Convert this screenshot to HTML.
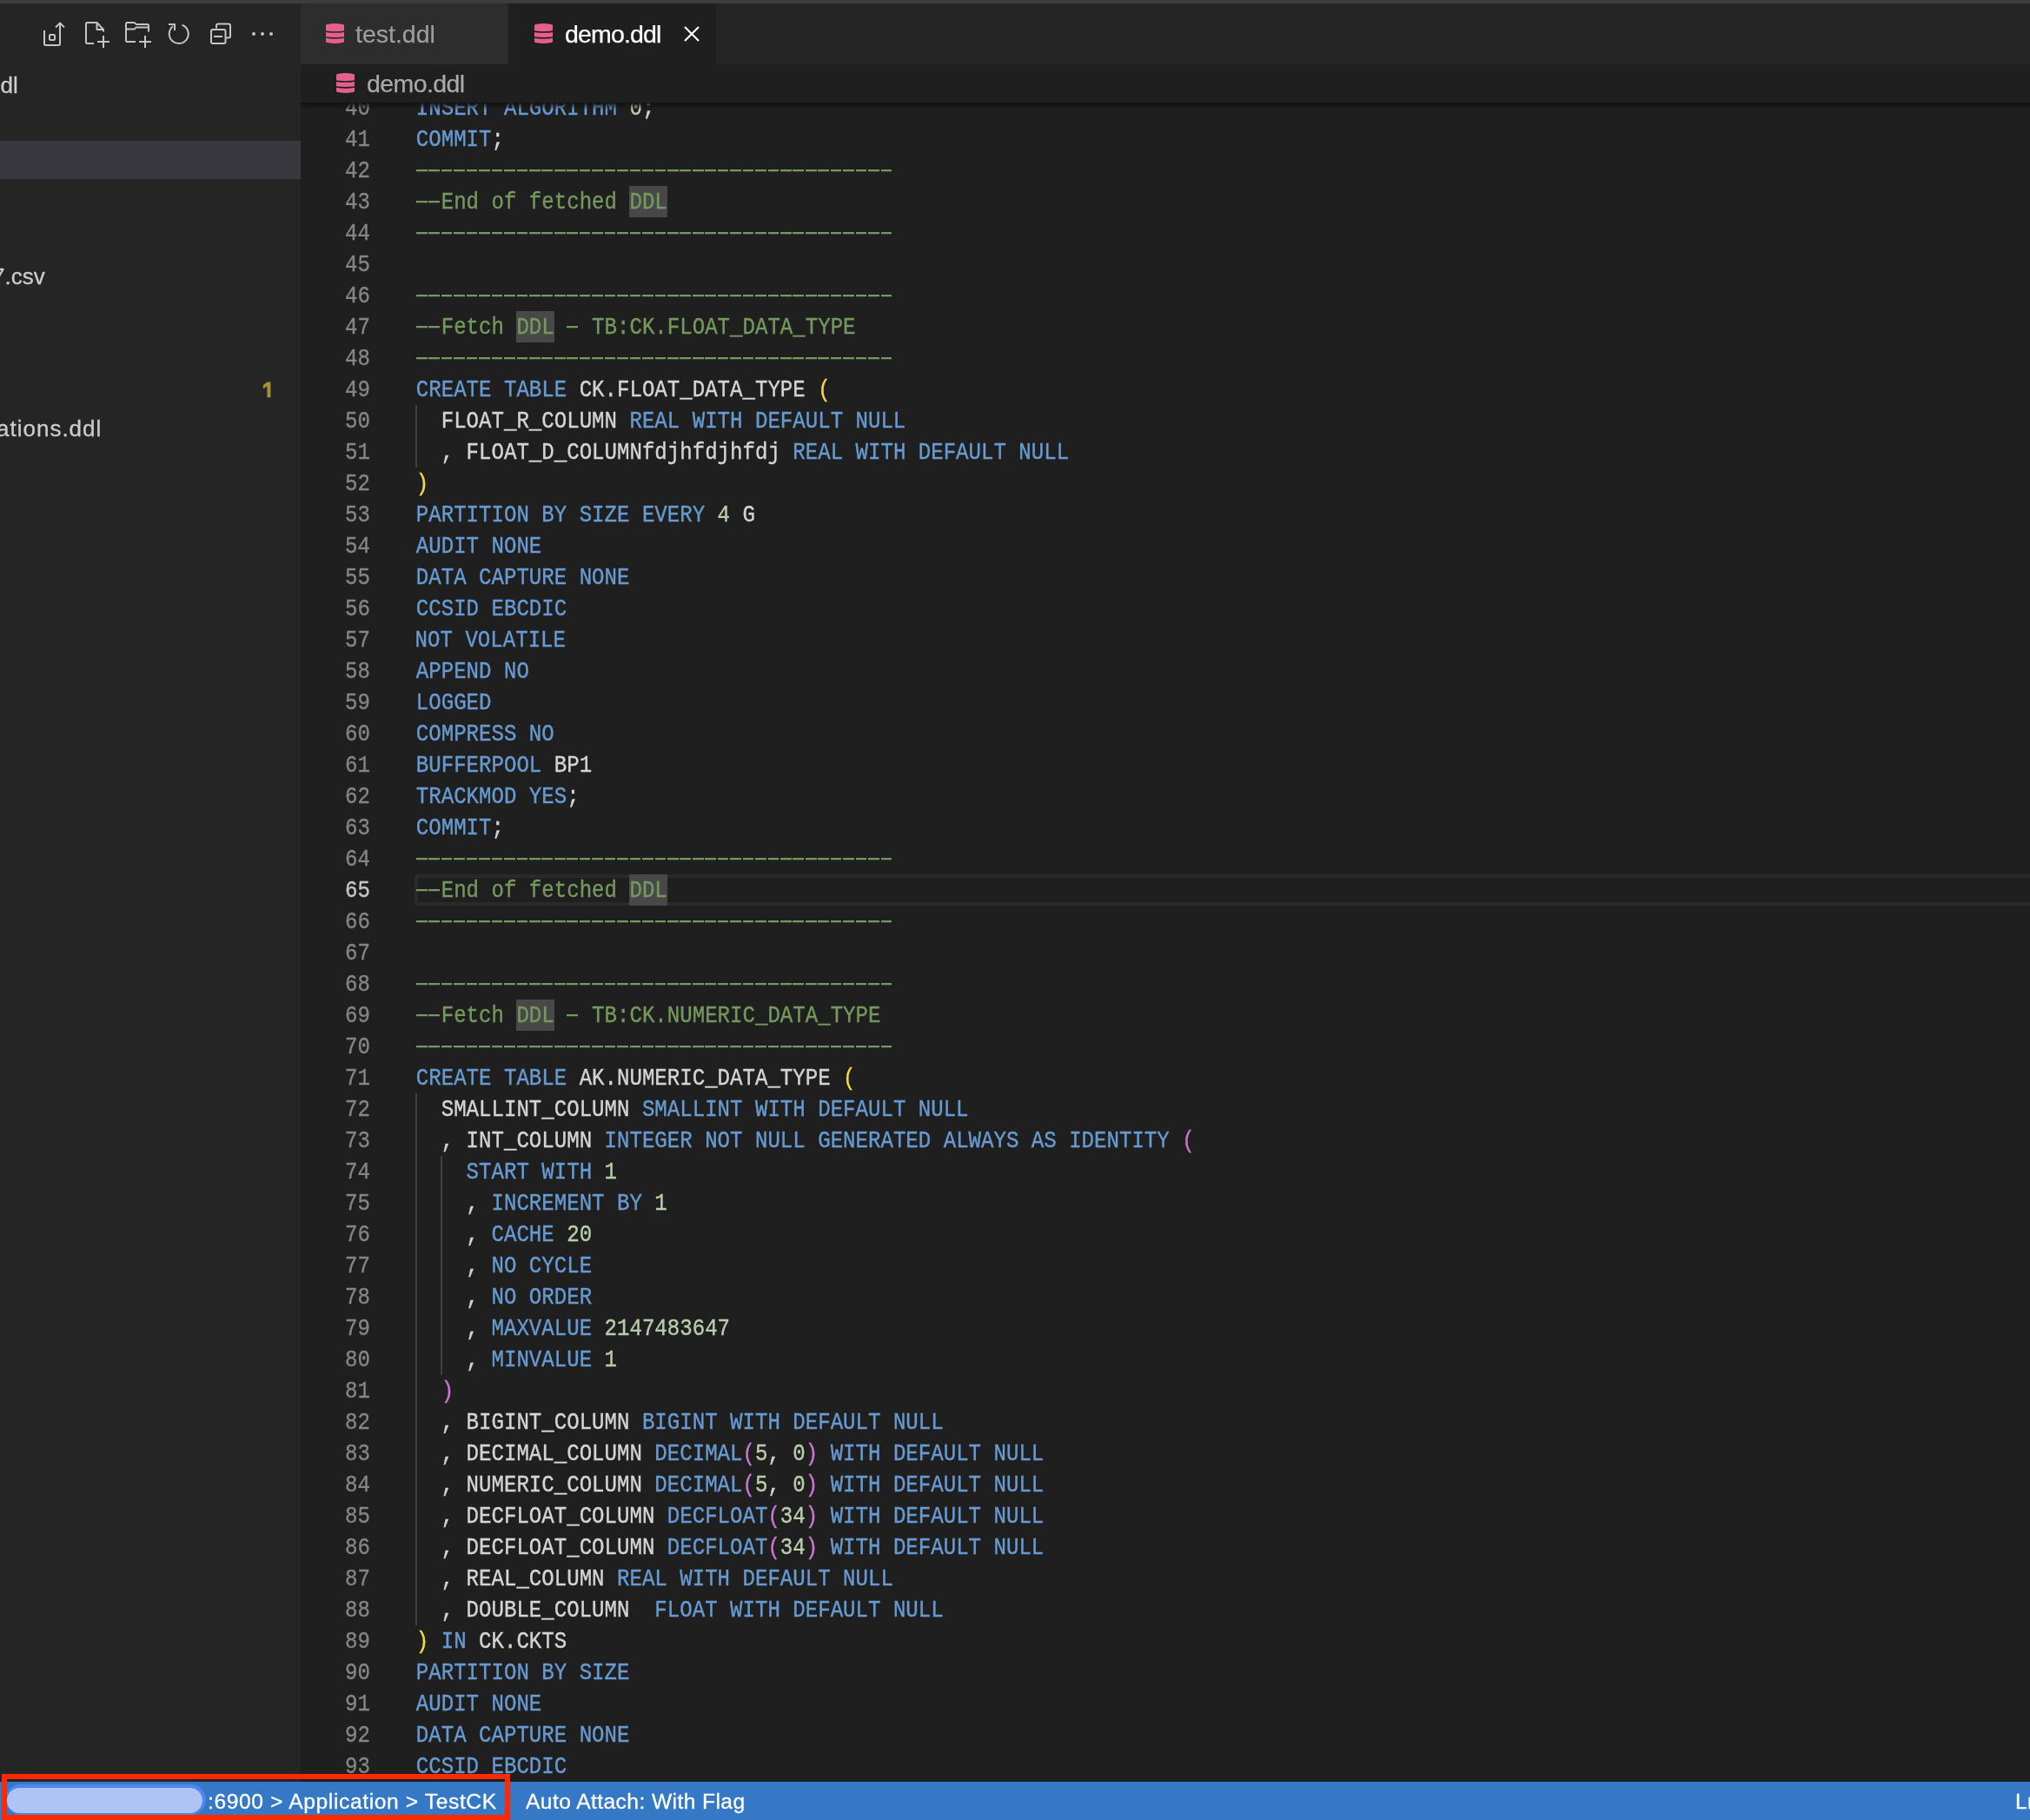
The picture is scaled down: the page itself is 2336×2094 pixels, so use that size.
<!DOCTYPE html>
<html><head><meta charset="utf-8">
<style>
*{margin:0;padding:0;box-sizing:border-box}
html,body{width:2336px;height:2094px;overflow:hidden;background:#1f1f1f}
body{position:relative;font-family:"Liberation Sans",sans-serif;--x0:478.8px;--cw:14.45px}
.abs{position:absolute}
#topstrip{left:0;top:0;width:2336px;height:4px;background:#3d3d3d}
#sidebar{left:0;top:4px;width:346px;height:2046px;background:#252525}
#tabbar{left:346px;top:4px;width:1990px;height:70px;background:#252525}
#tab1{left:346px;top:4px;width:238px;height:70px;background:#2d2d2d}
#tab2{left:586px;top:4px;width:238px;height:70px;background:#1f1f1f}
#crumbs{left:346px;top:74px;width:1990px;height:44px;background:#1f1f1f}
#editor{left:346px;top:118px;width:1990px;height:1932px;background:#1f1f1f;overflow:hidden}
#shadow{left:346px;top:118px;width:1990px;height:8px;background:linear-gradient(#121212,rgba(18,18,18,0))}
#status{left:0;top:2050px;width:2336px;height:44px;background:#3478c6}
.tabtxt{position:absolute;will-change:transform;-webkit-text-stroke:0.25px currentColor;font-size:28.5px;line-height:1;white-space:nowrap}
.sbt{position:absolute;will-change:transform;-webkit-text-stroke:0.3px currentColor;font-size:26px;line-height:1;color:#cccccc;white-space:nowrap}
.stt{position:absolute;will-change:transform;-webkit-text-stroke:0.3px currentColor;font-size:24.6px;line-height:1;color:#ffffff;white-space:nowrap;letter-spacing:0.3px}
.ln{position:absolute;-webkit-text-stroke:0.35px currentColor;left:345px;width:81px;transform:scaleY(1.125);transform-origin:0 8px;height:36px;line-height:36px;text-align:right;font-family:"Liberation Mono",monospace;font-size:24.08px;color:#858585;white-space:pre}
.ln.act{color:#c6c6c6}
.clip{position:absolute;left:0;top:118px;width:2336px;height:1932px;overflow:hidden;will-change:transform}
.clip .ln,.clip .cl,.clip .ig,.clip .hlb,.clip .cur{margin-top:-118px}
.cl{position:absolute;-webkit-text-stroke:0.35px currentColor;left:var(--x0);transform:scaleY(1.125);transform-origin:0 8px;height:36px;line-height:36px;font-family:"Liberation Mono",monospace;font-size:24.08px;color:#d4d4d4;white-space:pre}
.k{color:#679ad1}.c{color:#74985d}.n{color:#bacdab}.b1{color:#f9d849}.b2{color:#cc76d1}
.dsh{display:inline-block;height:2.2px;vertical-align:top;margin-top:16px;background:repeating-linear-gradient(90deg,#74985d 0 12.6px,transparent 12.6px 14.45px)}
.ig{position:absolute;width:2px;background:#404040}
.hlb{position:absolute;height:36px;background:#484848}
.cur{position:absolute;height:36px;border:4px solid #2a2a2a}
svg{position:absolute;overflow:visible}
</style></head><body>
<div id="topstrip" class="abs"></div>
<div id="sidebar" class="abs"></div>
<div class="abs" style="left:0;top:162px;width:346px;height:44px;background:#37373d"></div>
<!-- toolbar icons -->
<svg style="left:0;top:0" width="346" height="74" viewBox="0 0 346 74" fill="none" stroke="#c5c5c5" stroke-width="2" stroke-linejoin="round" stroke-linecap="butt">
  <path d="M51 35 V50.5 Q51 52 52.5 52 H67.5 Q69 52 69 50.5 V26.5"/>
  <path d="M64 31.5 L69 26.5 L74 31.5"/>
  <rect x="57" y="40" width="6" height="6" rx="1"/>
  <path d="M108 50 H100.5 Q99 50 99 48.5 V27.5 Q99 26 100.5 26 H111.5 L119 34 V36.5"/>
  <path d="M111.5 26 V34 H119"/>
  <path d="M112 48 H126 M119 41 V55"/>
  <path d="M156 48 H146.5 Q145 48 145 46.5 V27.5 Q145 26 146.5 26 H154.5 L157 28 H169.5 Q171 28 171 29.5 V36.5"/>
  <path d="M145 33.5 H154.5 L157 31.5 H171"/>
  <path d="M160 48 H174 M167 41 V55"/>
  <path d="M209.6 28.7 A11 11 0 1 1 199.0 30.3"/>
  <path d="M194 28 H201 V35"/>
  <path d="M249 32.5 V29.5 Q249 27.5 251 27.5 H263 Q265 27.5 265 29.5 V41.5 Q265 43.5 263 43.5 H260"/>
  <rect x="243" y="34" width="16.5" height="16" rx="2"/>
  <path d="M246 42 H256"/>
  <circle cx="292" cy="39" r="2" fill="#c5c5c5" stroke="none"/>
  <circle cx="302" cy="39" r="2" fill="#c5c5c5" stroke="none"/>
  <circle cx="312" cy="39" r="2" fill="#c5c5c5" stroke="none"/>
</svg>
<div class="sbt" style="left:-14px;top:85px">ddl</div>
<div class="sbt" style="left:-9px;top:305px">7.csv</div>
<div class="sbt" style="left:-4px;top:480px;letter-spacing:1px">ations.ddl</div>
<svg style="left:0;top:0" width="346" height="500" viewBox="0 0 346 500"><path d="M307.4 439.6 H311.4 V457.2 H307.4 V444.6 L302.8 447.2 V443.2 Z" fill="#a68f36"/></svg>

<div id="tabbar" class="abs"></div>
<div id="tab1" class="abs"></div>
<div id="tab2" class="abs"></div>
<svg style="left:375px;top:27px" width="21" height="23" viewBox="0 0 21 23">
  <path d="M0 2 A10.5 1.9 0 0 1 21 2 V21 A10.5 1.9 0 0 1 0 21 Z" fill="#e5608a"/>
  <path d="M-1 8.7 A11.5 1.3 0 0 0 22 8.7 M-1 15.6 A11.5 1.2 0 0 0 22 15.6" stroke="#2d2d2d" stroke-width="1.7" fill="none"/>
</svg>
<div class="tabtxt" style="left:409px;top:25px;color:#9d9d9d">test.ddl</div>
<svg style="left:615px;top:27px" width="21" height="23" viewBox="0 0 21 23">
  <path d="M0 2 A10.5 1.9 0 0 1 21 2 V21 A10.5 1.9 0 0 1 0 21 Z" fill="#e5608a"/>
  <path d="M-1 8.7 A11.5 1.3 0 0 0 22 8.7 M-1 15.6 A11.5 1.2 0 0 0 22 15.6" stroke="#1f1f1f" stroke-width="1.7" fill="none"/>
</svg>
<div class="tabtxt" style="left:650px;top:25px;color:#ffffff;letter-spacing:-0.85px">demo.ddl</div>
<svg style="left:787px;top:30px" width="18" height="18" viewBox="0 0 18 18">
  <path d="M1 1 L17 17 M17 1 L1 17" stroke="#ffffff" stroke-width="2.1"/>
</svg>

<div id="crumbs" class="abs"></div>
<svg style="left:387px;top:84px" width="21" height="23" viewBox="0 0 21 23">
  <path d="M0 2 A10.5 1.9 0 0 1 21 2 V21 A10.5 1.9 0 0 1 0 21 Z" fill="#e5608a"/>
  <path d="M-1 8.7 A11.5 1.3 0 0 0 22 8.7 M-1 15.6 A11.5 1.2 0 0 0 22 15.6" stroke="#1f1f1f" stroke-width="1.7" fill="none"/>
</svg>
<div class="tabtxt" style="left:422px;top:82px;color:#a9a9a9;letter-spacing:-0.6px">demo.ddl</div>

<div id="editor" class="abs"></div>
<div class="clip">
<div class="cur" style="top:1006px;left:477px;width:1870px"></div>

<div class="hlb" style="top:1150px;left:calc(var(--x0) + 8*var(--cw));width:calc(3*var(--cw))"></div>
<div class="hlb" style="top:1006px;left:calc(var(--x0) + 17*var(--cw));width:calc(3*var(--cw))"></div>
<div class="hlb" style="top:358px;left:calc(var(--x0) + 8*var(--cw));width:calc(3*var(--cw))"></div>
<div class="hlb" style="top:214px;left:calc(var(--x0) + 17*var(--cw));width:calc(3*var(--cw))"></div>
<div class="ln" style="top:106px">40</div>
<div class="ln" style="top:142px">41</div>
<div class="ln" style="top:178px">42</div>
<div class="ln" style="top:214px">43</div>
<div class="ln" style="top:250px">44</div>
<div class="ln" style="top:286px">45</div>
<div class="ln" style="top:322px">46</div>
<div class="ln" style="top:358px">47</div>
<div class="ln" style="top:394px">48</div>
<div class="ln" style="top:430px">49</div>
<div class="ln" style="top:466px">50</div>
<div class="ln" style="top:502px">51</div>
<div class="ln" style="top:538px">52</div>
<div class="ln" style="top:574px">53</div>
<div class="ln" style="top:610px">54</div>
<div class="ln" style="top:646px">55</div>
<div class="ln" style="top:682px">56</div>
<div class="ln" style="top:718px">57</div>
<div class="ln" style="top:754px">58</div>
<div class="ln" style="top:790px">59</div>
<div class="ln" style="top:826px">60</div>
<div class="ln" style="top:862px">61</div>
<div class="ln" style="top:898px">62</div>
<div class="ln" style="top:934px">63</div>
<div class="ln" style="top:970px">64</div>
<div class="ln act" style="top:1006px">65</div>
<div class="ln" style="top:1042px">66</div>
<div class="ln" style="top:1078px">67</div>
<div class="ln" style="top:1114px">68</div>
<div class="ln" style="top:1150px">69</div>
<div class="ln" style="top:1186px">70</div>
<div class="ln" style="top:1222px">71</div>
<div class="ln" style="top:1258px">72</div>
<div class="ln" style="top:1294px">73</div>
<div class="ln" style="top:1330px">74</div>
<div class="ln" style="top:1366px">75</div>
<div class="ln" style="top:1402px">76</div>
<div class="ln" style="top:1438px">77</div>
<div class="ln" style="top:1474px">78</div>
<div class="ln" style="top:1510px">79</div>
<div class="ln" style="top:1546px">80</div>
<div class="ln" style="top:1582px">81</div>
<div class="ln" style="top:1618px">82</div>
<div class="ln" style="top:1654px">83</div>
<div class="ln" style="top:1690px">84</div>
<div class="ln" style="top:1726px">85</div>
<div class="ln" style="top:1762px">86</div>
<div class="ln" style="top:1798px">87</div>
<div class="ln" style="top:1834px">88</div>
<div class="ln" style="top:1870px">89</div>
<div class="ln" style="top:1906px">90</div>
<div class="ln" style="top:1942px">91</div>
<div class="ln" style="top:1978px">92</div>
<div class="ln" style="top:2014px">93</div>
<div class="cl" style="top:106px"><span class="k">INSERT ALGORITHM</span> <span class="n">0</span>;</div>
<div class="cl" style="top:142px"><span class="k">COMMIT</span>;</div>
<div class="cl" style="top:178px"><span class="dsh" style="width:calc(38*var(--cw))"></span></div>
<div class="cl" style="top:214px"><span class="dsh" style="width:calc(2*var(--cw))"></span><span class="c">End of fetched </span><span class="c">DDL</span></div>
<div class="cl" style="top:250px"><span class="dsh" style="width:calc(38*var(--cw))"></span></div>
<div class="cl" style="top:286px"></div>
<div class="cl" style="top:322px"><span class="dsh" style="width:calc(38*var(--cw))"></span></div>
<div class="cl" style="top:358px"><span class="dsh" style="width:calc(2*var(--cw))"></span><span class="c">Fetch </span><span class="c">DDL</span><span class="c"> </span><span class="dsh" style="width:12.8px;margin-right:1.65px"></span><span class="c"> TB:CK.FLOAT_DATA_TYPE</span></div>
<div class="cl" style="top:394px"><span class="dsh" style="width:calc(38*var(--cw))"></span></div>
<div class="cl" style="top:430px"><span class="k">CREATE TABLE</span> CK.FLOAT_DATA_TYPE <span class="b1">(</span></div>
<div class="cl" style="top:466px">  FLOAT_R_COLUMN <span class="k">REAL WITH DEFAULT NULL</span></div>
<div class="cl" style="top:502px">  , FLOAT_D_COLUMNfdjhfdjhfdj <span class="k">REAL WITH DEFAULT NULL</span></div>
<div class="cl" style="top:538px"><span class="b1">)</span></div>
<div class="cl" style="top:574px"><span class="k">PARTITION BY SIZE EVERY</span> <span class="n">4</span> G</div>
<div class="cl" style="top:610px"><span class="k">AUDIT NONE</span></div>
<div class="cl" style="top:646px"><span class="k">DATA CAPTURE NONE</span></div>
<div class="cl" style="top:682px"><span class="k">CCSID EBCDIC</span></div>
<div class="cl" style="top:718px;margin-left:-1.2px"><span class="k">NOT VOLATILE</span></div>
<div class="cl" style="top:754px"><span class="k">APPEND NO</span></div>
<div class="cl" style="top:790px"><span class="k">LOGGED</span></div>
<div class="cl" style="top:826px"><span class="k">COMPRESS NO</span></div>
<div class="cl" style="top:862px"><span class="k">BUFFERPOOL</span> BP1</div>
<div class="cl" style="top:898px"><span class="k">TRACKMOD YES</span>;</div>
<div class="cl" style="top:934px"><span class="k">COMMIT</span>;</div>
<div class="cl" style="top:970px"><span class="dsh" style="width:calc(38*var(--cw))"></span></div>
<div class="cl" style="top:1006px"><span class="dsh" style="width:calc(2*var(--cw))"></span><span class="c">End of fetched </span><span class="c">DDL</span></div>
<div class="cl" style="top:1042px"><span class="dsh" style="width:calc(38*var(--cw))"></span></div>
<div class="cl" style="top:1078px"></div>
<div class="cl" style="top:1114px"><span class="dsh" style="width:calc(38*var(--cw))"></span></div>
<div class="cl" style="top:1150px"><span class="dsh" style="width:calc(2*var(--cw))"></span><span class="c">Fetch </span><span class="c">DDL</span><span class="c"> </span><span class="dsh" style="width:12.8px;margin-right:1.65px"></span><span class="c"> TB:CK.NUMERIC_DATA_TYPE</span></div>
<div class="cl" style="top:1186px"><span class="dsh" style="width:calc(38*var(--cw))"></span></div>
<div class="cl" style="top:1222px"><span class="k">CREATE TABLE</span> AK.NUMERIC_DATA_TYPE <span class="b1">(</span></div>
<div class="cl" style="top:1258px">  SMALLINT_COLUMN <span class="k">SMALLINT WITH DEFAULT NULL</span></div>
<div class="cl" style="top:1294px">  , INT_COLUMN <span class="k">INTEGER NOT NULL GENERATED ALWAYS AS IDENTITY</span> <span class="b2">(</span></div>
<div class="cl" style="top:1330px">    <span class="k">START WITH</span> <span class="n">1</span></div>
<div class="cl" style="top:1366px">    , <span class="k">INCREMENT BY</span> <span class="n">1</span></div>
<div class="cl" style="top:1402px">    , <span class="k">CACHE</span> <span class="n">20</span></div>
<div class="cl" style="top:1438px">    , <span class="k">NO CYCLE</span></div>
<div class="cl" style="top:1474px">    , <span class="k">NO ORDER</span></div>
<div class="cl" style="top:1510px">    , <span class="k">MAXVALUE</span> <span class="n">2147483647</span></div>
<div class="cl" style="top:1546px">    , <span class="k">MINVALUE</span> <span class="n">1</span></div>
<div class="cl" style="top:1582px">  <span class="b2">)</span></div>
<div class="cl" style="top:1618px">  , BIGINT_COLUMN <span class="k">BIGINT WITH DEFAULT NULL</span></div>
<div class="cl" style="top:1654px">  , DECIMAL_COLUMN <span class="k">DECIMAL</span><span class="b2">(</span><span class="n">5</span>, <span class="n">0</span><span class="b2">)</span> <span class="k">WITH DEFAULT NULL</span></div>
<div class="cl" style="top:1690px">  , NUMERIC_COLUMN <span class="k">DECIMAL</span><span class="b2">(</span><span class="n">5</span>, <span class="n">0</span><span class="b2">)</span> <span class="k">WITH DEFAULT NULL</span></div>
<div class="cl" style="top:1726px">  , DECFLOAT_COLUMN <span class="k">DECFLOAT</span><span class="b2">(</span><span class="n">34</span><span class="b2">)</span> <span class="k">WITH DEFAULT NULL</span></div>
<div class="cl" style="top:1762px">  , DECFLOAT_COLUMN <span class="k">DECFLOAT</span><span class="b2">(</span><span class="n">34</span><span class="b2">)</span> <span class="k">WITH DEFAULT NULL</span></div>
<div class="cl" style="top:1798px">  , REAL_COLUMN <span class="k">REAL WITH DEFAULT NULL</span></div>
<div class="cl" style="top:1834px">  , DOUBLE_COLUMN  <span class="k">FLOAT WITH DEFAULT NULL</span></div>
<div class="cl" style="top:1870px"><span class="b1">)</span> <span class="k">IN</span> CK.CKTS</div>
<div class="cl" style="top:1906px"><span class="k">PARTITION BY SIZE</span></div>
<div class="cl" style="top:1942px"><span class="k">AUDIT NONE</span></div>
<div class="cl" style="top:1978px"><span class="k">DATA CAPTURE NONE</span></div>
<div class="cl" style="top:2014px"><span class="k">CCSID EBCDIC</span></div>
<div class="ig" style="top:466px;left:calc(var(--x0) + 0*var(--cw) - 1px);height:72px"></div>
<div class="ig" style="top:1258px;left:calc(var(--x0) + 0*var(--cw) - 1px);height:612px"></div>
<div class="ig" style="top:1330px;left:calc(var(--x0) + 2*var(--cw) - 1px);height:252px"></div>
</div>
<div id="shadow" class="abs"></div>

<div id="status" class="abs"></div>
<div class="stt" style="left:239px;top:2061px;letter-spacing:0.62px">:6900 &gt; Application &gt; TestCK</div>
<div class="stt" style="left:605px;top:2061px;letter-spacing:0.42px">Auto Attach: With Flag</div>
<div class="stt" style="left:2319px;top:2061px">Ln 65, Col 1</div>
<div class="abs" style="left:6px;top:2053px;width:231px;height:35px;border-radius:17.5px;background:#4f86ee"></div>
<div class="abs" style="left:8px;top:2057px;width:225px;height:29px;border-radius:14.5px;background:#aec4f5"></div>
<div class="abs" style="left:2px;top:2041px;width:585px;height:53px;border:6px solid #fc2a00"></div>
</body></html>
